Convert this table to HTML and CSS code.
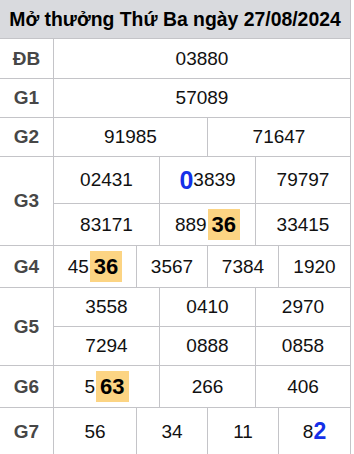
FILE: index.html
```html
<!DOCTYPE html>
<html lang="vi">

<head>
    <meta charset="UTF-8">
    <meta name="viewport" content="width=device-width, initial-scale=1.0">
    <title>Kết quả Thứ Ba 27/08/2024</title>
    <link rel="stylesheet" href="styles.css">
</head>

<body>

    <div class="result">
        <div class="title">Mở thưởng Thứ Ba ngày 27/08/2024</div>

        <div class="prize">
            <div class="label">ĐB</div>
            <div class="nums cols-1 rows-db">
                <div class="num">03880</div>
            </div>
        </div>

        <div class="prize">
            <div class="label">G1</div>
            <div class="nums cols-1 rows-1">
                <div class="num">57089</div>
            </div>
        </div>

        <div class="prize">
            <div class="label">G2</div>
            <div class="nums cols-2 rows-1">
                <div class="num">91985</div>
                <div class="num">71647</div>
            </div>
        </div>

        <div class="prize">
            <div class="label">G3</div>
            <div class="nums cols-3 rows-g3">
                <div class="num">02431</div>
                <div class="num"><b class="blue">0</b>3839</div>
                <div class="num">79797</div>
                <div class="num">83171</div>
                <div class="num">889<b class="hit">36</b></div>
                <div class="num">33415</div>
            </div>
        </div>

        <div class="prize">
            <div class="label">G4</div>
            <div class="nums cols-4 rows-tall">
                <div class="num">45<b class="hit">36</b></div>
                <div class="num">3567</div>
                <div class="num">7384</div>
                <div class="num">1920</div>
            </div>
        </div>

        <div class="prize">
            <div class="label">G5</div>
            <div class="nums cols-3 rows-1">
                <div class="num">3558</div>
                <div class="num">0410</div>
                <div class="num">2970</div>
                <div class="num">7294</div>
                <div class="num">0888</div>
                <div class="num">0858</div>
            </div>
        </div>

        <div class="prize">
            <div class="label">G6</div>
            <div class="nums cols-3 rows-tall">
                <div class="num">5<b class="hit">63</b></div>
                <div class="num">266</div>
                <div class="num">406</div>
            </div>
        </div>

        <div class="prize">
            <div class="label">G7</div>
            <div class="nums cols-4 rows-last">
                <div class="num">56</div>
                <div class="num">34</div>
                <div class="num">11</div>
                <div class="num">8<b class="blue small">2</b></div>
            </div>
        </div>
    </div>

</body>

</html>
```

FILE: styles.css
```css
* {
    box-sizing: border-box;
}

body {
    margin: 0;
    background: #fff;
    font-family: 'Liberation Sans', Arial, sans-serif;
    color: #111;
}

.result {
    width: 351px;
    border-right: 1px solid #c4c4c8;
}

.title {
    height: 39px;
    padding-bottom: 1px;
    line-height: 38px;
    background: #d9dade;
    border-bottom: 1px solid #c4c4c8;
    text-align: center;
    font-size: 19.4px;
    font-weight: bold;
    color: #000;
    white-space: nowrap;
}

.prize {
    display: flex;
}

.label {
    width: 54px;
    flex: none;
    border-right: 1px solid #c4c4c8;
    border-bottom: 1px solid #c4c4c8;
    display: flex;
    align-items: center;
    justify-content: center;
    font-size: 19px;
    font-weight: bold;
    color: #474747;
}

.nums {
    flex: 1;
    display: grid;
}

.cols-1 { grid-template-columns: 1fr; }
.cols-2 { grid-template-columns: 154px 1fr; }
.cols-3 { grid-template-columns: 106px 96px 1fr; }
.cols-4 { grid-template-columns: 83px 71px 71px 1fr; }

.rows-db { grid-auto-rows: 40px; }
.rows-1 { grid-auto-rows: 39px; }
.rows-g3 { grid-template-rows: 47px 42px; }
.rows-tall { grid-auto-rows: 42px; }
.rows-last { grid-auto-rows: 48px; }

.num {
    display: flex;
    align-items: center;
    justify-content: center;
    font-size: 19px;
    border-right: 1px solid #c4c4c8;
    border-bottom: 1px solid #c4c4c8;
}

.nums .num:last-child,
.cols-2 .num:nth-child(2n),
.cols-3 .num:nth-child(3n),
.cols-4 .num:nth-child(4n) {
    border-right: none;
}

.hit {
    display: inline-block;
    background: #fcd483;
    color: #000;
    font-size: 22px;
    line-height: 31px;
    padding: 0 4px;
    margin-left: 1px;
}

.blue {
    color: #1530e8;
    font-size: 25px;
}

.blue.small {
    font-size: 23px;
}
```
